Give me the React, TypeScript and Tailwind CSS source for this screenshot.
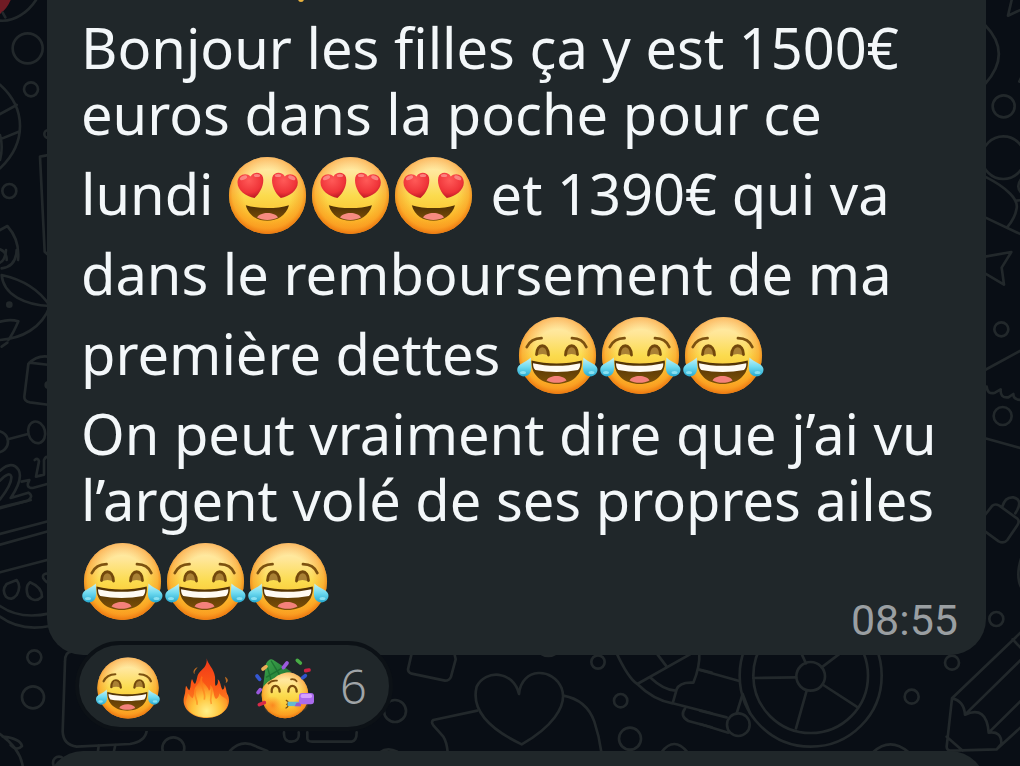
const reactionCount = 6;

function Gradients() {
  return (
    <svg className="absolute size-0" aria-hidden="true">
      <defs>
        <linearGradient id="face" x1="0" y1="0" x2="0" y2="1">
          <stop offset="0" stopColor="#fff0b8" />
          <stop offset="0.22" stopColor="#ffe696" />
          <stop offset="0.5" stopColor="#fbdb4e" />
          <stop offset="0.78" stopColor="#fcc22f" />
          <stop offset="1" stopColor="#fba424" />
        </linearGradient>
        <radialGradient id="rim" cx="0.5" cy="0.47" r="0.53">
          <stop offset="0.58" stopColor="#f98d1b" stopOpacity="0" />
          <stop offset="0.86" stopColor="#f98d1b" stopOpacity="0.5" />
          <stop offset="1" stopColor="#ea7610" />
        </radialGradient>
        <radialGradient id="heart" cx="0.45" cy="0.3" r="0.7">
          <stop offset="0" stopColor="#ff5a58" />
          <stop offset="0.7" stopColor="#ef3338" />
          <stop offset="1" stopColor="#bd1a24" />
        </radialGradient>
        <linearGradient id="tear" x1="0" y1="0" x2="0" y2="1">
          <stop offset="0" stopColor="#c9f3f4" />
          <stop offset="0.5" stopColor="#6fdaf0" />
          <stop offset="1" stopColor="#27a9cf" />
        </linearGradient>
        <linearGradient id="mouth" x1="0" y1="0" x2="0" y2="1">
          <stop offset="0" stopColor="#4d2f04" />
          <stop offset="1" stopColor="#7d5108" />
        </linearGradient>
        <linearGradient id="flame" x1="0" y1="0" x2="0" y2="1">
          <stop offset="0" stopColor="#f0381a" />
          <stop offset="0.45" stopColor="#fb5715" />
          <stop offset="1" stopColor="#fda02a" />
        </linearGradient>
        <radialGradient id="glow" cx="0.5" cy="0.85" r="0.75">
          <stop offset="0" stopColor="#fff089" />
          <stop offset="0.45" stopColor="#ffc43b" />
          <stop offset="0.8" stopColor="#fd8420" />
          <stop offset="1" stopColor="#fb5f17" />
        </radialGradient>
        <radialGradient id="cheek">
          <stop offset="0" stopColor="#fb7f1c" stopOpacity="0.85" />
          <stop offset="1" stopColor="#fb8f2b" stopOpacity="0" />
        </radialGradient>
        <linearGradient id="hat" x1="0" y1="0" x2="1" y2="1">
          <stop offset="0" stopColor="#3fa84d" />
          <stop offset="1" stopColor="#17692c" />
        </linearGradient>
      </defs>
    </svg>
  );
}

function Face() {
  return (
    <>
      <circle cx="41.5" cy="41.5" r="38.5" fill="url(#face)" />
      <circle cx="41.5" cy="41.5" r="38.5" fill="url(#rim)" />
    </>
  );
}

function HeartEyes({ className }: { className: string }) {
  return (
    <svg viewBox="0 0 83 83" className={className} role="img" aria-label="yeux en cœur">
      <Face />
      <g fill="url(#heart)">
        <path d="M28.5 44 C20 42.5 11.5 36.5 11.5 28.5 C11.5 20 20.5 18 24.5 22.5 C27 17.5 35.5 17.5 37 23.5 C38.5 30.5 34 39.5 28.5 44Z" />
        <path d="M54.8 44 C63.3 42.5 71.8 36.5 71.8 28.5 C71.8 20 62.8 18 58.8 22.5 C56.3 17.5 47.8 17.5 46.3 23.5 C44.8 30.5 49.3 39.5 54.8 44Z" />
      </g>
      <g fill="#ffa7a0" opacity="0.65">
        <ellipse cx="17.5" cy="23.8" rx="3.8" ry="2" transform="rotate(-25 17.5 23.8)" />
        <ellipse cx="31" cy="21.5" rx="3.2" ry="1.6" />
        <ellipse cx="52" cy="21.5" rx="3.2" ry="1.6" />
        <ellipse cx="65.8" cy="23.8" rx="3.8" ry="2" transform="rotate(25 65.8 23.8)" />
      </g>
      <path d="M19.8 51.2 C32 55 51 55 63 51.2 C60 61.5 51 66.8 41.4 66.8 C31.5 66.8 22.5 61.5 19.8 51.2Z" fill="url(#mouth)" />
      <path d="M31 63.5 C34 57.5 49 57.5 52 63.5 C46 66.8 36.5 66.8 31 63.5Z" fill="#f78b80" />
    </svg>
  );
}

function Joy({ className }: { className: string }) {
  return (
    <svg viewBox="0 0 83 83" className={className} role="img" aria-label="larmes de joie">
      <Face />
      <g fill="none" stroke="#7c5110" strokeWidth="2.8" strokeLinecap="round">
        <path d="M10.8 33 C13.5 27.5 19 24.3 25.5 24.2" />
        <path d="M56 24.2 C62.5 24.3 68 27.5 70.3 33" />
      </g>
      <g fill="#a98034">
        <path d="M20.5 41.5 C19.5 30.5 33 29.5 32.5 41.5 Q26.5 38.5 20.5 41.5Z" />
        <path d="M49.5 41.5 C49 29.5 62 30.5 61.5 41.5 Q55.5 38.5 49.5 41.5Z" />
      </g>
      <g fill="none" stroke="#72480c" strokeWidth="2.8" strokeLinecap="round">
        <path d="M20.5 40.5 C20.5 29 32 28.5 32.5 41" />
        <path d="M49.5 41 C50 28.5 61.5 29 61.5 40.5" />
      </g>
      <path d="M15.5 46.5 C31 50.5 50 50.5 65.8 46.5 C67 61 55.5 70 40.6 70 C26 70 14.5 61 15.5 46.5Z" fill="url(#mouth)" />
      <path d="M17 49.2 C31 52.6 50 52.6 64.3 49.2 C64.5 52 63.5 54.5 62 56 C48 58.5 33 58.5 19.3 56 C17.7 54.5 17 52 17 49.2Z" fill="#fffaf2" />
      <path d="M30.5 66.5 C33 60.5 48 60.5 50.5 66.5 C44.5 69.6 36.5 69.6 30.5 66.5Z" fill="#f4817b" />
      <g fill="url(#tear)">
        <path d="M14.8 43.5 C14.8 49 17 57 12.5 60.8 C7 65 0.5 60.5 1.3 54.8 C2.2 49.5 9.5 49 14.8 43.5Z" />
        <path d="M67.4 43.5 C67.4 49 65.2 57 69.7 60.8 C75.2 65 82.2 60.5 81.4 54.8 C80.5 49.5 72.7 49 67.4 43.5Z" />
      </g>
      <ellipse cx="7" cy="58.5" rx="3" ry="1.6" fill="#a6effa" opacity="0.7" />
      <ellipse cx="75.5" cy="58.5" rx="3" ry="1.6" fill="#a6effa" opacity="0.7" />
    </svg>
  );
}

function Fire({ className }: { className: string }) {
  return (
    <svg viewBox="-4 17 198 198" className={className} role="img" aria-label="feu">
      <path
        d="M94 27 C97 45 116 58 119 82 C120 96 118 102 121 110 C128 106 129 97 127 90 C138 98 134 112 142 121 C147 119 148 113 147 107 C155 118 151 127 158 138 C171 172 140 206 95 206 C48 206 16 174 27 139 C31 128 29 120 32 109 C36 113 36 119 42 123 C48 111 44 102 50 89 C54 96 54 101 59 104 C67 91 63 78 74 67 C87 56 96 46 94 27Z"
        fill="url(#flame)"
      />
      <path
        d="M78 78 C76 101 96 106 101 124 C107 119 106 112 104 106 C119 120 112 139 122 149 C129 146 132 138 132 132 C142 148 154 143 157 158 C155 187 130 204 95 204 C58 204 35 188 31 158 C34 148 37 142 37 132 C43 137 45 144 52 147 C60 132 53 120 64 108 C70 100 77 91 78 78Z"
        fill="url(#glow)"
      />
      <path d="M80 82 C68 110 94 122 87 151 M109 113 C112 136 101 146 108 164 M61 119 C53 143 69 151 65 166" fill="none" stroke="#fd7b19" strokeWidth="5" opacity="0.6" />
      <path d="M67 53 C55 58 51 68 58 75 C56 65 62 62 67 53Z M149 82 C160 88 160 97 151 101 C154 92 150 91 149 82Z" fill="#b96a22" />
    </svg>
  );
}

function Party({ className }: { className: string }) {
  return (
    <svg viewBox="238 17 198 198" className={className} role="img" aria-label="fête">
      <circle cx="334" cy="137" r="70" fill="url(#face)" />
      <circle cx="334" cy="137" r="70" fill="url(#rim)" />
      <circle cx="297" cy="168" r="28" fill="url(#cheek)" />
      <circle cx="382" cy="164" r="23" fill="url(#cheek)" />
      <path d="M268 113 L277 43 Q287 25 298 31 L354 68 Q320 69 302 86 Q282 95 268 113Z" fill="url(#hat)" />
      <path d="M281 53 L292 91 M292 34 L317 75 M277 84 L328 55" stroke="#126029" strokeWidth="4" opacity="0.6" />
      <g fill="none" stroke="#7c4e0e" strokeLinecap="round">
        <path d="M284 103 Q293 92 310 94 M352 90 Q363 88 369 96" strokeWidth="5" />
        <path d="M294 128 C292 104 317 104 318 127 M344 127 C343 104 368 104 369 127" strokeWidth="7" />
        <path d="M338 153 Q348 159 340 165 Q347 170 337 176" strokeWidth="4" />
      </g>
      <path d="M342 157 L380 157 L380 171 L342 170Z" fill="#64bad0" />
      <path d="M368 161 L382 158 L382 171 L363 171Z" fill="#9a58cd" />
      <rect x="376" y="131" width="45" height="34" rx="9" fill="#aa6bed" />
      <rect x="381" y="134" width="34" height="12" rx="5" fill="#d5a0ff" />
      <g strokeLinecap="round" strokeWidth="11">
        <path d="M340 41 L329 55" stroke="#9b5add" />
        <path d="M371 33 L380 41" stroke="#48ad45" />
        <path d="M396 64 L406 62" stroke="#cf2345" />
        <path d="M387 85 L395 79" stroke="#3154c9" />
        <path d="M250 80 L258 90" stroke="#3457d2" />
        <path d="M253 130 L260 121" stroke="#9a58dc" />
        <path d="M257 166 L272 160" stroke="#d82948" />
        <path d="M268 59 L277 52" stroke="#ebae55" />
      </g>
    </svg>
  );
}

// Each group is drawn at three times its size and scaled down.
function Wallpaper() {
  return (
    <svg
      viewBox="0 0 1020 766"
      preserveAspectRatio="xMidYMin slice"
      className="absolute inset-0 size-full"
      fill="none"
      stroke="#22282b"
      strokeWidth="8"
      strokeLinecap="round"
      strokeLinejoin="round"
      aria-hidden="true"
    >
      <g transform="scale(0.33333)">
        <path d="M0 0 H32 Q22 25 0 42Z" fill="#701b24" stroke="none" />
        <path d="M0 62 C45 66 85 35 108 0 M8 38 L16 52" />
        <circle cx="83" cy="145" r="45" />
        <circle cx="93" cy="268" r="21" />
        <path d="M0 254 C80 325 80 430 0 505 M0 342 L50 315 M0 418 L56 395 M0 405 Q10 440 0 480" />
        <path d="M140 466 L120 470 L134 755 L145 765" />
        <circle cx="28" cy="573" r="21" />
        <path d="M0 690 L22 678 Q60 720 54 780 M0 748 Q20 756 20 780" />
        <circle cx="145" cy="402" r="12" />
      </g>
      <g transform="translate(0 250) scale(0.33333)">
        <path d="M50 0 Q48 50 5 55 M18 0 Q16 30 0 38 M5 75 C10 135 75 165 150 168 C115 115 65 88 5 75Z M150 168 C125 235 65 265 0 270 M0 215 Q30 206 55 214 Q40 250 25 270 M5 290 L22 278" />
        <circle cx="28" cy="164" r="6" fill="#22282b" />
        <path d="M145 320 Q110 315 85 342 L73 440 Q72 454 90 457 L150 465 M88 338 L150 345" />
        <circle cx="145" cy="405" r="8" />
        <circle cx="-8" cy="575" r="32" />
        <path d="M24 568 L84 552" />
        <ellipse cx="110" cy="547" rx="25" ry="33" transform="rotate(-15 110 547)" />
        <path d="M0 662 Q36 630 56 660 Q70 688 32 744 L85 728 Q102 738 84 752 L0 772 M0 692 Q28 662 34 680 Q36 702 0 748" />
        <path d="M104 630 Q114 622 117 634 L108 680 L132 674 L132 630 Q140 612 150 628 M65 695 L88 690 Q75 714 98 714 L150 700" />
      </g>
      <g transform="translate(0 500) scale(0.33333)">
        <path d="M0 25 L92 0 M0 102 L150 62 M0 134 L150 92 M0 217 L150 178 M0 318 Q60 360 150 340 M0 350 Q60 395 150 378" />
        <path d="M50 240 Q65 260 50 285 Q35 304 18 290 Q4 270 20 252Z M90 247 Q126 262 126 290 Q104 311 84 288 Q74 260 90 247Z M145 220 Q125 220 130 235 Q140 250 148 248" />
        <circle cx="103" cy="472" r="21" />
        <circle cx="99" cy="592" r="33" />
        <path d="M250 455 H215 Q195 455 195 485 L188 695 Q190 735 230 740 L390 732 Q435 725 440 693 M0 702 Q60 745 68 798 M8 710 Q60 715 66 738 Q50 755 32 735" />
        <circle cx="177" cy="788" r="18" />
      </g>
      <g transform="translate(70 635) scale(0.33333)">
        <path d="M86 332 L84 348 M136 330 L132 348 M480 348 Q515 310 560 335 L592 348 M642 292 Q640 320 665 320 Q690 318 686 292 M712 292 V310 Q712 320 726 320 H845 Q860 318 860 292" />
        <circle cx="310" cy="340" r="33" />
        <circle cx="975" cy="228" r="33" />
        <path d="M930 352 Q952 335 982 350" />
      </g>
      <g transform="translate(390 590) scale(0.33333)">
        <path d="M65 190 L54 238 Q54 248 65 251 L165 272 Q178 272 183 260 L197 208 L193 190 M455 192 Q475 204 495 192" />
        <path d="M387 312 C370 240 285 238 260 290 C240 370 315 425 395 463 C480 415 535 350 515 295 C490 232 395 230 387 312Z" />
        <path d="M262 362 L130 390 Q122 395 130 406 L160 440 Q170 455 173 486 M520 317 Q590 330 613 395 Q628 440 634 486" />
        <circle cx="624" cy="216" r="20" />
        <circle cx="692" cy="332" r="20" />
        <circle cx="720" cy="446" r="33" />
        <path d="M815 486 Q852 438 892 486" />
        <path d="M680 190 Q715 265 742 282 L905 190 M742 282 Q790 330 848 340 L860 298 Q870 275 910 278 Q930 230 928 190 M800 190 L830 230 M780 262 Q820 300 856 302 M848 340 L965 370 M925 238 L965 248 M965 412 L895 393 Q868 378 885 356" />
      </g>
      <g transform="translate(700 590) scale(0.33333)">
        <circle cx="332" cy="257" r="213" />
        <circle cx="332" cy="257" r="172" />
        <circle cx="332" cy="259" r="43" />
        <path d="M288 262 L160 264 M318 220 L290 160 M365 232 L440 175 M370 285 L470 350 M320 302 L288 415 M0 240 L118 273 M128 312 L110 370 M150 370 L128 312 M0 362 L80 382 M0 402 L85 428" />
        <circle cx="115" cy="404" r="34" />
        <circle cx="635" cy="320" r="21" />
        <circle cx="756" cy="218" r="21" />
        <circle cx="889" cy="87" r="21" />
        <path d="M520 486 Q570 440 625 486" />
        <path d="M970 120 L756 325 L740 470 Q740 482 755 482 L890 478 L970 405 M756 325 Q792 332 795 374 L970 202 M795 374 Q860 345 866 428 L970 325 M866 428 Q905 422 904 462 L890 478 M740 440 L788 482 M938 148 L970 182" />
      </g>
      <g transform="translate(940 0) scale(0.33333)">
        <path d="M215 0 L204 47 L245 28 M135 75 Q218 160 135 252" />
        <circle cx="191" cy="319" r="33" />
        <circle cx="190" cy="473" r="64" />
        <path d="M135 530 C205 565 235 600 230 625 Q225 655 203 680 M135 652 L245 704 M245 535 Q225 560 245 580 M230 602 L245 600 M135 770 L214 756 L185 803 L192 854 L135 820 M245 230 L238 245" />
        <circle cx="184" cy="988" r="21" />
      </g>
      <g transform="translate(940 320) scale(0.33333)">
        <path d="M135 150 L245 90 M140 200 Q142 225 165 218 L182 208 Q180 235 205 232 L220 222 Q220 240 245 240 M135 355 L245 385" />
        <circle cx="188" cy="288" r="27" />
        <path d="M135 585 L157 557 Q165 550 178 557 L232 596 Q240 604 232 616 L202 660 Q192 672 176 664 L135 634 M187 560 Q195 530 220 532 Q252 540 226 580 M245 710 Q225 770 245 805" />
      </g>
    </svg>
  );
}

export default function App() {
  const emoji = 'mt-1 h-[83px] w-[83px] shrink-0';
  return (
    <div className='relative h-screen overflow-hidden bg-[#090e15] font-["Noto_Sans",sans-serif]'>
      <Gradients />
      <Wallpaper />

      <main className="relative ml-[47px] mr-[34px] h-full overflow-hidden">
        <article className="rounded-b-[36px] bg-[#20272a] pb-[10px] pl-[34px] pr-7 pt-[14px]">
          <div className="whitespace-nowrap text-[56px] leading-[66px] text-[#f3f7f9]">
            <p>Bonjour les filles ça y est 1500€</p>
            <p>euros dans la poche pour ce</p>
            <p className="flex h-[94px] items-center">
              <span className="mr-3">lundi</span>
              <HeartEyes className={emoji} />
              <HeartEyes className={emoji} />
              <HeartEyes className={emoji} />
              <span className="ml-4">et 1390€ qui va</span>
            </p>
            <p>dans le remboursement de ma</p>
            <p className="flex h-[94px] items-center">
              <span className="mr-4">première dettes</span>
              <Joy className={emoji} />
              <Joy className={emoji} />
              <Joy className={emoji} />
            </p>
            <p>On peut vraiment dire que j’ai vu</p>
            <p>l’argent volé de ses propres ailes</p>
            <p className="flex h-[94px] items-center">
              <Joy className={emoji} />
              <Joy className={emoji} />
              <Joy className={emoji} />
            </p>
          </div>
          <time className="-mt-[31px] block text-right font-[Roboto,sans-serif] text-[43px] leading-[50px] text-[#9a9fa2]">
            08:55
          </time>
        </article>

        <button className="-mt-[14px] ml-7 flex items-center gap-[13px] rounded-full border-4 border-[#0c1116] bg-[#20272a] pb-[6px] pl-4 pr-[22px] pt-[10px]">
          <Joy className="size-[66px]" />
          <Fire className="size-[66px]" />
          <Party className="size-[66px]" />
          <span className="ml-2 pb-1 text-[47px] font-light leading-[62px] text-[#a0a5a8]">{reactionCount}</span>
        </button>

        <article className="mt-5 h-24 rounded-t-[36px] bg-[#20272a]" />
      </main>

      {/* tail end of the line scrolled out of view */}
      <span className="absolute left-[298px] -top-1 size-[6px] rounded-full bg-[#e9b23d]" />
    </div>
  );
}
